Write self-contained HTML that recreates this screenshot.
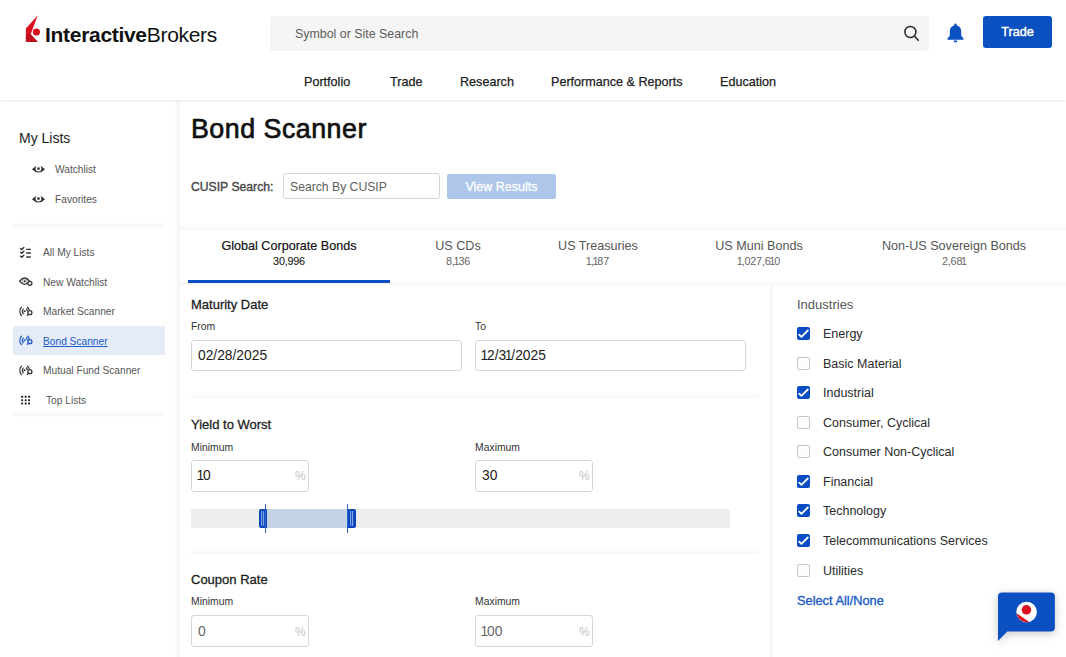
<!DOCTYPE html>
<html><head><meta charset="utf-8">
<style>
*{box-sizing:border-box;margin:0;padding:0}
html,body{width:1066px;height:657px;overflow:hidden;background:#fff;font-family:"Liberation Sans",sans-serif;color:#1c1c1c}
.a{position:absolute;white-space:nowrap}
#hdr{position:absolute;left:0;top:0;width:1066px;height:100px;background:#fff;box-shadow:0 1px 3px rgba(0,0,0,0.1);z-index:2}
.search{position:absolute;left:270px;top:16px;width:659px;height:35px;background:#f5f5f5;border-radius:2px}
.btn-trade{position:absolute;left:983px;top:16px;width:69px;height:32px;background:#0b50c0;border-radius:3px;color:#fff;font-size:12.6px;text-align:center;line-height:32px;-webkit-text-stroke:0.45px #fff}
.nav{font-size:12.6px;color:#1c1c1c;top:74.5px;-webkit-text-stroke:0.25px #1c1c1c}
.sb{position:absolute;left:175px;top:101px;width:6px;height:556px;background:linear-gradient(to right,rgba(0,0,0,0),rgba(0,0,0,0.045) 50%,rgba(0,0,0,0))}
.side{font-size:10.2px;color:#555}
.sep{position:absolute;height:5px;background:linear-gradient(to bottom,rgba(0,0,0,0),rgba(0,0,0,0.035) 50%,rgba(0,0,0,0))}
.lbl{font-size:10.4px;color:#333}
.sec{font-size:13px;color:#1c1c1c;-webkit-text-stroke:0.28px #1c1c1c}
.inp{position:absolute;border:1px solid #d6d6d6;border-radius:3px;background:#fff}
.val{font-size:13.8px;color:#1c1c1c}
.pct{font-size:12px;color:#c4c4c4}
.cb{position:absolute;left:797px;width:13px;height:13px;border-radius:2px}
.cb.on{background:#0a4cc4}
.cb.off{border:1px solid #bfc7d3;background:#fcfcfc}
.ind{font-size:12.5px;color:#2a2a2a;left:823px}
.n1{font-style:normal;margin-left:-0.11em;margin-right:-0.08em}
.tab{font-size:12.6px;color:#555;text-align:center}
.cnt{font-size:10.8px;letter-spacing:-0.2px;color:#666;text-align:center}
</style></head><body>
<div id="hdr">
  <!-- logo -->
  <svg class="a" style="left:24px;top:13px" width="16" height="32" viewBox="0 0 16 32">
    <path d="M13.8 2.2 L1.9 15.6 L1.9 28.9 L13.8 28.9 L6.7 21.3 Z" fill="#dc0f20"/><path d="M1.9 21.3 L6.7 21.3 L13.8 28.9 L1.9 28.9 Z" fill="#c00e1d"/>
    <circle cx="12.4" cy="19" r="3.6" fill="#dc0f20"/>
  </svg>
  <div class="a" style="left:45px;top:23px;font-size:21px;color:#111;letter-spacing:-0.3px"><b>Interactive</b>Brokers</div>
  <div class="search"></div>
  <div class="a" style="left:295px;top:27px;font-size:12.4px;color:#5c5c5c">Symbol or Site Search</div>
  <svg class="a" style="left:902px;top:24px" width="18" height="18" viewBox="0 0 18 18"><circle cx="8.4" cy="8" r="5.5" fill="none" stroke="#222" stroke-width="1.45"/><path d="M12.4 12 L16.2 16.2" stroke="#222" stroke-width="1.5" stroke-linecap="round"/></svg>
  <svg class="a" style="left:946px;top:23px" width="19" height="20" viewBox="0 0 19 20"><path d="M9.5 0.5c-0.8 0-1.3 0.6-1.3 1.3v0.6C5.4 3 3.8 5.3 3.8 8.2v4.6L1.5 15.5v1.3h16v-1.3l-2.3-2.7V8.2c0-2.9-1.6-5.2-4.4-5.8V1.8c0-0.7-0.5-1.3-1.3-1.3z" fill="#0b50c0"/><path d="M7.6 17.5a1.9 1.9 0 0 0 3.8 0z" fill="#0b50c0"/></svg>
  <div class="btn-trade">Trade</div>
  <div class="a nav" style="left:304px">Portfolio</div>
  <div class="a nav" style="left:390px">Trade</div>
  <div class="a nav" style="left:460px">Research</div>
  <div class="a nav" style="left:551px">Performance &amp; Reports</div>
  <div class="a nav" style="left:720px">Education</div>
</div>

<div class="sb"></div>
<!-- sidebar -->
<div class="a" style="left:19px;top:130px;font-size:14px;color:#1c1c1c">My Lists</div>
<div class="a side" style="left:55px;top:164px">Watchlist</div>
<div class="a side" style="left:55px;top:194px">Favorites</div>
<div class="sep" style="left:13px;top:223px;width:152px"></div>
<div class="a side" style="left:43px;top:247px">All My Lists</div>
<div class="a side" style="left:43px;top:277px">New Watchlist</div>
<div class="a side" style="left:43px;top:306px">Market Scanner</div>
<div class="a" style="left:13px;top:326px;width:152px;height:29px;background:#e5ecf7"></div>
<div class="a side" style="left:43px;top:336px;color:#1a5bc4;text-decoration:underline">Bond Scanner</div>
<div class="a side" style="left:43px;top:365px">Mutual Fund Scanner</div>
<div class="a side" style="left:46px;top:395px">Top Lists</div>
<div class="sep" style="left:13px;top:412px;width:152px"></div>


<!-- sidebar icons -->
<svg class="a" style="left:30px;top:163px" width="17" height="12" viewBox="0 0 17 12"><path d="M2 6.2 Q8.5 -0.6 15 6.2 Q8.5 13 2 6.2Z" fill="#2e2e2e"/><circle cx="8.5" cy="5.5" r="2.9" fill="#fff"/><circle cx="8.5" cy="5.6" r="1.3" fill="#2e2e2e"/></svg>
<svg class="a" style="left:30px;top:193px" width="17" height="12" viewBox="0 0 17 12"><path d="M2 6.2 Q8.5 -0.6 15 6.2 Q8.5 13 2 6.2Z" fill="#2e2e2e"/><circle cx="8.5" cy="5.5" r="2.9" fill="#fff"/><circle cx="8.5" cy="5.6" r="1.3" fill="#2e2e2e"/></svg>
<svg class="a" style="left:16px;top:242px" width="20" height="20" viewBox="0 0 20 20" fill="none" stroke="#333" stroke-linecap="round" stroke-linejoin="round">
<path d="M4.6 6.6 L5.8 7.6 L7.8 5.6" stroke-width="1.4"/><path d="M4.6 10.2 L5.8 11.2 L7.8 9.2" stroke-width="1.4"/><path d="M4.6 14.2 L5.8 15.2 L7.8 13.2" stroke-width="1.4"/>
<path d="M10.2 7.4 H14.8 M10.2 11 H14.8 M10.2 15 H14.8" stroke-width="1.3" stroke-linecap="butt"/></svg>
<svg class="a" style="left:16px;top:272px" width="20" height="20" viewBox="0 0 20 20" fill="none" stroke="#333">
<path d="M3.6 9.2 Q8.6 2.8 13.6 9.2 Q8.6 15.6 3.6 9.2Z" stroke-width="1.3"/>
<circle cx="8.7" cy="9.3" r="2.3" stroke-width="0.8" stroke="#888"/><circle cx="8.7" cy="9.3" r="1.05" fill="#222" stroke="none"/>
<circle cx="13.9" cy="11.3" r="2" stroke-width="1.3" fill="#fff"/></svg>
<svg class="a" style="left:16px;top:301px" width="20" height="20" viewBox="0 0 20 20" fill="none" stroke="#333" stroke-linecap="round">
<path d="M5.4 6.2 C3.4 8.6 3.4 12.2 5.4 14.6" stroke-width="1.3"/><path d="M7.2 8 C6.2 9.4 6.2 11.4 7.2 12.8" stroke-width="1.2"/>
<circle cx="8.7" cy="10.3" r="1" fill="#333" stroke="none"/>
<path d="M10.4 8 C10.9 8.6 11.1 9.2 11.2 9.6" stroke-width="1.2"/><path d="M11.6 6.2 C12.3 7 12.8 7.8 13.1 8.6" stroke-width="1.3"/>
<circle cx="13.9" cy="11.7" r="2" stroke-width="1.3"/><path d="M12.3 13.2 L11.4 14.5" stroke-width="1.2"/></svg>
<svg class="a" style="left:16px;top:330px" width="20" height="20" viewBox="0 0 20 20" fill="none" stroke="#1a56c4" stroke-linecap="round">
<path d="M5.4 6.2 C3.4 8.6 3.4 12.2 5.4 14.6" stroke-width="1.3"/><path d="M7.2 8 C6.2 9.4 6.2 11.4 7.2 12.8" stroke-width="1.2"/>
<circle cx="8.7" cy="10.3" r="1" fill="#1a56c4" stroke="none"/>
<path d="M10.4 8 C10.9 8.6 11.1 9.2 11.2 9.6" stroke-width="1.2"/><path d="M11.6 6.2 C12.3 7 12.8 7.8 13.1 8.6" stroke-width="1.3"/>
<circle cx="13.9" cy="11.7" r="2" stroke-width="1.3"/><path d="M12.3 13.2 L11.4 14.5" stroke-width="1.2"/></svg>
<svg class="a" style="left:16px;top:360px" width="20" height="20" viewBox="0 0 20 20" fill="none" stroke="#333" stroke-linecap="round">
<path d="M5.4 6.2 C3.4 8.6 3.4 12.2 5.4 14.6" stroke-width="1.3"/><path d="M7.2 8 C6.2 9.4 6.2 11.4 7.2 12.8" stroke-width="1.2"/>
<circle cx="8.7" cy="10.3" r="1" fill="#333" stroke="none"/>
<path d="M10.4 8 C10.9 8.6 11.1 9.2 11.2 9.6" stroke-width="1.2"/><path d="M11.6 6.2 C12.3 7 12.8 7.8 13.1 8.6" stroke-width="1.3"/>
<circle cx="13.9" cy="11.7" r="2" stroke-width="1.3"/><path d="M12.3 13.2 L11.4 14.5" stroke-width="1.2"/></svg>
<svg class="a" style="left:16px;top:390px" width="20" height="20" viewBox="0 0 20 20" fill="#222"><rect x="5.25" y="5.85" width="1.9" height="1.9" rx="0.5"/><rect x="8.75" y="5.85" width="1.9" height="1.9" rx="0.5"/><rect x="12.15" y="5.85" width="1.9" height="1.9" rx="0.5"/><rect x="5.25" y="9.25" width="1.9" height="1.9" rx="0.5"/><rect x="8.75" y="9.25" width="1.9" height="1.9" rx="0.5"/><rect x="12.15" y="9.25" width="1.9" height="1.9" rx="0.5"/><rect x="5.25" y="12.55" width="1.9" height="1.9" rx="0.5"/><rect x="8.75" y="12.55" width="1.9" height="1.9" rx="0.5"/><rect x="12.15" y="12.55" width="1.9" height="1.9" rx="0.5"/></svg>

<!-- main -->
<div class="a" style="left:191px;top:114px;font-size:26.8px;color:#111;-webkit-text-stroke:0.7px #111;letter-spacing:0.5px">Bond Scanner</div>
<div class="a" style="left:191px;top:180px;font-size:12.2px;color:#444;-webkit-text-stroke:0.35px #444">CUSIP Search:</div>
<div class="inp" style="left:283px;top:173px;width:157px;height:26px"></div>
<div class="a" style="left:290px;top:180px;font-size:12.2px;color:#5e5e5e">Search By CUSIP</div>
<div class="a" style="left:447px;top:174px;width:109px;height:25px;background:#adc6ea;border-radius:2px;color:#fff;font-size:12.5px;text-align:center;line-height:27px;-webkit-text-stroke:0.3px #fff">View Results</div>

<!-- tabs -->
<div class="sep" style="left:179px;top:226px;width:887px"></div>
<div class="a tab" style="left:189px;top:239px;width:200px;color:#111;-webkit-text-stroke:0.18px #111">Global Corporate Bonds</div>
<div class="a cnt" style="left:189px;top:255px;width:200px;color:#222;-webkit-text-stroke:0.1px #222">30,996</div>
<div class="a tab" style="left:408px;top:239px;width:100px">US CDs</div>
<div class="a cnt" style="left:408px;top:255px;width:100px">8,<i class="n1">1</i>36</div>
<div class="a tab" style="left:548px;top:239px;width:100px">US Treasuries</div>
<div class="a cnt" style="left:548px;top:255px;width:100px"><i class="n1">1</i>,<i class="n1">1</i>87</div>
<div class="a tab" style="left:699px;top:239px;width:120px">US Muni Bonds</div>
<div class="a cnt" style="left:699px;top:255px;width:120px"><i class="n1">1</i>,027,6<i class="n1">1</i>0</div>
<div class="a tab" style="left:874px;top:239px;width:160px">Non-US Sovereign Bonds</div>
<div class="a cnt" style="left:874px;top:255px;width:160px">2,68<i class="n1">1</i></div>
<div class="a" style="left:188px;top:280px;width:202px;height:3px;background:#0b4fc4"></div>
<div class="sep" style="left:179px;top:281px;width:887px"></div>

<!-- left filters -->
<div class="a" style="left:769px;top:284px;width:5px;height:373px;background:linear-gradient(to right,rgba(0,0,0,0),rgba(0,0,0,0.04) 50%,rgba(0,0,0,0))"></div>
<div class="a sec" style="left:191px;top:297px">Maturity Date</div>
<div class="a lbl" style="left:191px;top:321px">From</div>
<div class="a lbl" style="left:475px;top:321px">To</div>
<div class="inp" style="left:191px;top:340px;width:271px;height:31px"></div>
<div class="a val" style="left:198px;top:348px">02/28/2025</div>
<div class="inp" style="left:475px;top:340px;width:271px;height:31px"></div>
<div class="a val" style="left:482px;top:348px"><i class="n1">1</i>2/3<i class="n1">1</i>/2025</div>
<div class="sep" style="left:191px;top:394px;width:568px"></div>

<div class="a sec" style="left:191px;top:417px">Yield to Worst</div>
<div class="a lbl" style="left:191px;top:442px">Minimum</div>
<div class="a lbl" style="left:475px;top:442px">Maximum</div>
<div class="inp" style="left:191px;top:460px;width:118px;height:32px"></div>
<div class="a val" style="left:198px;top:468px"><i class="n1">1</i>0</div>
<div class="a pct" style="left:295px;top:469px">%</div>
<div class="inp" style="left:475px;top:460px;width:118px;height:32px"></div>
<div class="a val" style="left:482px;top:468px">30</div>
<div class="a pct" style="left:579px;top:469px">%</div>
<!-- slider -->
<div class="a" style="left:191px;top:509px;width:539px;height:19px;background:#ededed"></div>
<div class="a" style="left:266px;top:509px;width:81px;height:19px;background:#c5d3e6"></div>
<div class="a" style="left:259px;top:509px;width:8px;height:19px;border:2px solid #0a45c0;border-radius:2px 0 0 2px;background:repeating-linear-gradient(to right,#7ea3e2 0 1px,#1b52c4 1px 2px)"></div>
<div class="a" style="left:265px;top:504px;width:1px;height:29px;background:#2d62c9"></div>
<div class="a" style="left:348px;top:509px;width:8px;height:19px;border:2px solid #0a45c0;border-radius:0 2px 2px 0;background:repeating-linear-gradient(to right,#7ea3e2 0 1px,#1b52c4 1px 2px)"></div>
<div class="a" style="left:347px;top:504px;width:1px;height:29px;background:#2d62c9"></div>
<div class="sep" style="left:191px;top:550px;width:568px"></div>

<div class="a sec" style="left:191px;top:572px">Coupon Rate</div>
<div class="a lbl" style="left:191px;top:596px">Minimum</div>
<div class="a lbl" style="left:475px;top:596px">Maximum</div>
<div class="inp" style="left:191px;top:615px;width:118px;height:32px"></div>
<div class="a val" style="left:198px;top:624px;color:#666">0</div>
<div class="a pct" style="left:295px;top:625px">%</div>
<div class="inp" style="left:475px;top:615px;width:118px;height:32px"></div>
<div class="a val" style="left:482px;top:624px;color:#666"><i class="n1">1</i>00</div>
<div class="a pct" style="left:579px;top:625px">%</div>

<!-- industries -->
<div class="a" style="left:797px;top:297px;font-size:13px;color:#555">Industries</div>
<div class="cb on" style="top:327px"><svg width="13" height="13" viewBox="0 0 13 13" style="position:absolute;left:0;top:0"><path d="M2.2 7.6 L4.4 9.9 L10.8 3.5" fill="none" stroke="#fff" stroke-width="1.8" stroke-linecap="round" stroke-linejoin="round"/></svg></div><div class="a ind" style="top:327px">Energy</div>
<div class="cb off" style="top:357px"></div><div class="a ind" style="top:357px">Basic Material</div>
<div class="cb on" style="top:386px"><svg width="13" height="13" viewBox="0 0 13 13" style="position:absolute;left:0;top:0"><path d="M2.2 7.6 L4.4 9.9 L10.8 3.5" fill="none" stroke="#fff" stroke-width="1.8" stroke-linecap="round" stroke-linejoin="round"/></svg></div><div class="a ind" style="top:386px">Industrial</div>
<div class="cb off" style="top:416px"></div><div class="a ind" style="top:416px">Consumer, Cyclical</div>
<div class="cb off" style="top:445px"></div><div class="a ind" style="top:445px">Consumer Non-Cyclical</div>
<div class="cb on" style="top:475px"><svg width="13" height="13" viewBox="0 0 13 13" style="position:absolute;left:0;top:0"><path d="M2.2 7.6 L4.4 9.9 L10.8 3.5" fill="none" stroke="#fff" stroke-width="1.8" stroke-linecap="round" stroke-linejoin="round"/></svg></div><div class="a ind" style="top:475px">Financial</div>
<div class="cb on" style="top:504px"><svg width="13" height="13" viewBox="0 0 13 13" style="position:absolute;left:0;top:0"><path d="M2.2 7.6 L4.4 9.9 L10.8 3.5" fill="none" stroke="#fff" stroke-width="1.8" stroke-linecap="round" stroke-linejoin="round"/></svg></div><div class="a ind" style="top:504px">Technology</div>
<div class="cb on" style="top:534px"><svg width="13" height="13" viewBox="0 0 13 13" style="position:absolute;left:0;top:0"><path d="M2.2 7.6 L4.4 9.9 L10.8 3.5" fill="none" stroke="#fff" stroke-width="1.8" stroke-linecap="round" stroke-linejoin="round"/></svg></div><div class="a ind" style="top:534px">Telecommunications Services</div>
<div class="cb off" style="top:564px"></div><div class="a ind" style="top:564px">Utilities</div>
<div class="a" style="left:797px;top:593px;font-size:12.8px;color:#1a5bc4;-webkit-text-stroke:0.35px #1a5bc4">Select All/None</div>

<!-- chat -->
<svg class="a" style="left:990px;top:585px;filter:drop-shadow(0 2px 5px rgba(0,0,0,0.22))" width="76" height="72" viewBox="0 0 76 72">
  <path d="M12 7.4 H60.9 a4 4 0 0 1 4 4 V42.5 a4 4 0 0 1 -4 4 H17.3 L8 56 V11.4 a4 4 0 0 1 4 -4z" fill="#0b50c0"/>
  <circle cx="36.6" cy="27" r="10.3" fill="#fff"/>
  <circle cx="36.4" cy="24.8" r="4.75" fill="#d81222"/>
  <path d="M26.6 28.2 L39.4 36.9 A10.3 10.3 0 0 1 26.6 28.2Z" fill="#d81222"/>
</svg>
</body></html>
